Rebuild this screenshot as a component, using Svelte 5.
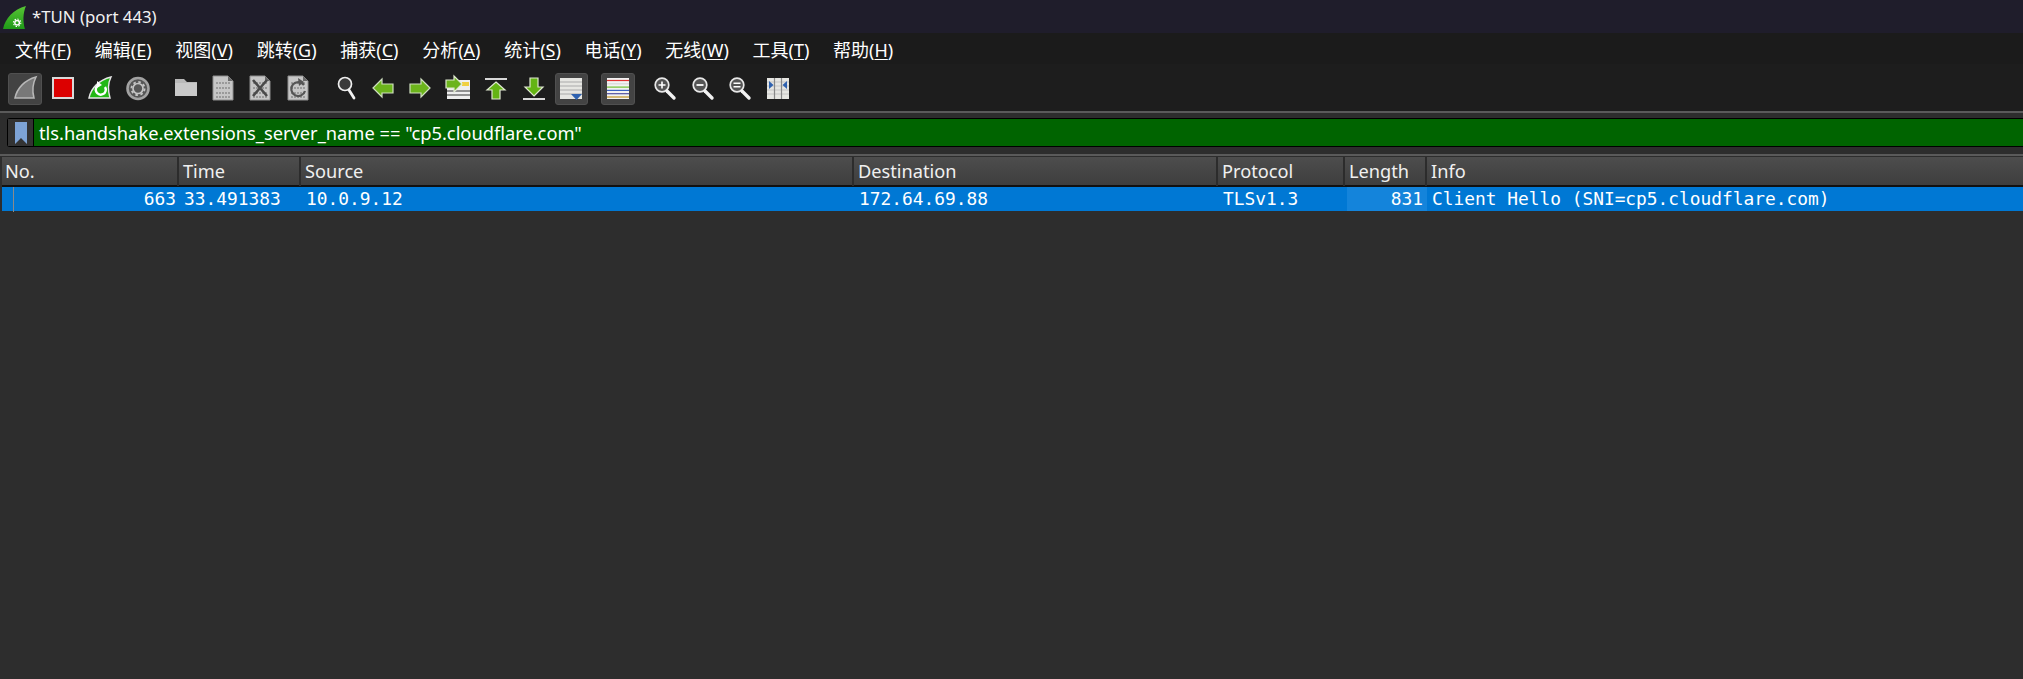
<script>
  const menus = [
    ['文件', 'F'], ['编辑', 'E'], ['视图', 'V'], ['跳转', 'G'], ['捕获', 'C'], ['分析', 'A'],
    ['统计', 'S'], ['电话', 'Y'], ['无线', 'W'], ['工具', 'T'], ['帮助', 'H']
  ];
  const groups = [
    [{ n: 'fin', on: true }, { n: 'stop' }, { n: 'reload' }, { n: 'gear' }],
    [{ n: 'folder' }, { n: 'doc' }, { n: 'close' }, { n: 'redo' }],
    [{ n: 'find' }, { n: 'left' }, { n: 'right' }, { n: 'goto' }, { n: 'first' }, { n: 'last' }, { n: 'auto', on: true }],
    [{ n: 'color', on: true }],
    [{ n: 'in' }, { n: 'out' }, { n: 'eq' }, { n: 'resize' }]
  ];
  const columns = ['No.', 'Time', 'Source', 'Destination', 'Protocol', 'Length', 'Info'];
  const colors = ['#e03030', '#d8d8d8', '#70c030', '#3a60c0', '#5050a0', '#c09020'];
</script>

{#snippet sheet()}
  <path d="M7 4H22L27 9V28H7Z" fill="#c6c6c6" stroke="#8e8e8e" stroke-width="1" />
  <path d="M22 4V9H27Z" fill="#6a6a6a" />
  <path d="M10 11H24M10 16H24M10 21H24M10 25H24" stroke="#9a9a9a" stroke-width="2" stroke-dasharray="2 1" />
{/snippet}

{#snippet lens(mark)}
  <circle cx="14" cy="13" r="6.8" fill="#555" stroke="#e8e8e8" stroke-width="1.7" />
  <path d="M19 19L26 26" stroke="#f2f2f2" stroke-width="3.4" stroke-linecap="round" />
  {#if mark === 'in'}<path d="M10.5 13H17.5M14 9.5V16.5" stroke="#fff" stroke-width="1.6" />{/if}
  {#if mark === 'out'}<path d="M10.5 13H17.5" stroke="#fff" stroke-width="1.8" />{/if}
  {#if mark === 'eq'}<path d="M10.5 11.3H17.5M10.5 14.7H17.5" stroke="#fff" stroke-width="1.5" />{/if}
{/snippet}

{#snippet icon(n)}
  <svg class="glyph" viewBox="0 0 34 34" width="34" height="34" aria-hidden="true">
    {#if n === 'fin'}
      <path d="M7 26C9 16 17 8 28 5C25 11 24 19 26 26Z" fill="#787878" stroke="#b8b8b8" stroke-width="1.5" />
    {:else if n === 'stop'}
      <rect x="7" y="6" width="20" height="20" fill="#dc0000" stroke="#d9d9d9" stroke-width="2" />
    {:else if n === 'reload'}
      <path d="M6 26C8 16 16 8 28 5C25 11 25 19 27 26Z" fill="#22b814" stroke="#e6e6e6" stroke-width="1.4" />
      <path d="M22 15A5 5 0 1 1 16 13" fill="none" stroke="#fff" stroke-width="2.4" />
      <path d="M14 9L19 13L14 16Z" fill="#fff" />
    {:else if n === 'gear'}
      <circle cx="17" cy="16.5" r="10.5" fill="#565656" stroke="#a2a2a2" stroke-width="2.6" />
      <circle cx="17" cy="16.5" r="5" fill="none" stroke="#c4c4c4" stroke-width="1.7" />
      <circle cx="17" cy="16.5" r="6.6" fill="none" stroke="#c4c4c4" stroke-width="1.8" stroke-dasharray="2.6 2.6" />
    {:else if n === 'folder'}
      <path d="M7 7H16L19 10H29V24H7Z" fill="#b9b9b9" />
      <path d="M7 11H29V24H7Z" fill="#c9c9c9" />
    {:else if n === 'doc'}
      {@render sheet()}
    {:else if n === 'close'}
      {@render sheet()}
      <path d="M10 8L24 24M24 8L10 24" stroke="#4a4a4a" stroke-width="2.6" />
    {:else if n === 'redo'}
      {@render sheet()}
      <path d="M23 13A7 7 0 1 0 24 19" fill="none" stroke="#555" stroke-width="2.2" />
      <path d="M17 6L23 10L18 14Z" fill="#555" />
    {:else if n === 'find'}
      <circle cx="17" cy="12" r="6.5" fill="#3a3a3a" stroke="#eee" stroke-width="1.7" />
      <path d="M21 18L26 26" stroke="#f2f2f2" stroke-width="2.8" stroke-linecap="round" />
    {:else if n === 'left'}
      <path d="M7 16L16 7V12H27V21H16V25Z" fill="#6cb41c" stroke="#cfe0c0" stroke-width="1.2" />
    {:else if n === 'right'}
      <path d="M27 16L18 7V12H7V21H18V25Z" fill="#6cb41c" stroke="#cfe0c0" stroke-width="1.2" />
    {:else if n === 'goto'}
      <path d="M6 8H29V27H6Z" fill="#eee" />
      <path d="M6 19H29M6 23H29" stroke="#333" stroke-width="1.2" />
      <rect x="21" y="10" width="7" height="4" fill="#f0d040" />
      <path d="M21 12L13 4V8H5V16H13V20Z" fill="#6cb41c" stroke="#dfe8d0" stroke-width="1.2" />
    {:else if n === 'first'}
      <path d="M6 7H28" stroke="#d8d8d8" stroke-width="2" />
      <path d="M17 10L26 18H21V27H13V18H8Z" fill="#64b414" stroke="#dfe8d0" stroke-width="1.2" />
    {:else if n === 'last'}
      <path d="M6 27H28" stroke="#d8d8d8" stroke-width="2" />
      <path d="M17 24L26 15H21V6H13V15H8Z" fill="#64b414" stroke="#dfe8d0" stroke-width="1.2" />
    {:else if n === 'auto'}
      <rect x="6" y="6" width="22" height="21" fill="#e6e6e2" />
      <path d="M6 10H28M6 14H28M6 18H28M6 22H28" stroke="#aaa" stroke-width="1" />
      <path d="M17 22H28L22.5 28Z" fill="#2f62b0" />
    {:else if n === 'color'}
      <rect x="6" y="6" width="22" height="21" fill="#f2f2f2" />
      {#each colors as c, i}
        <path d={`M6 ${8.5 + i * 3.3}H28`} stroke={c} stroke-width="1.2" />
      {/each}
    {:else if n === 'in' || n === 'out' || n === 'eq'}
      {@render lens(n)}
    {:else if n === 'resize'}
      <rect x="6" y="6" width="22" height="21" fill="#e6e6e2" />
      <path d="M6 10H28M6 14H28M6 18H28M6 22H28" stroke="#c4c4c4" stroke-width="1" />
      <path d="M13.5 6V27M20.5 6V27" stroke="#888" stroke-width="1.2" />
      <path d="M8 9L12.5 13L8 17ZM26 9L21.5 13L26 17Z" fill="#2f62b0" />
    {/if}
  </svg>
{/snippet}

<div class="window">
  <header class="title">
    <svg class="logo" viewBox="0 0 24 24" width="25" height="25" aria-hidden="true">
      <defs>
        <linearGradient id="finfill" x1="0" y1="0" x2="0" y2="1">
          <stop offset="0" stop-color="#58c535" />
          <stop offset="1" stop-color="#1f9a18" />
        </linearGradient>
      </defs>
      <path d="M1 23C3 13 11 4 23 1C20 8 20 16 22 23Z" fill="url(#finfill)" />
      <circle cx="14.5" cy="17" r="2.2" fill="none" stroke="#fff" stroke-width="1.4" />
      <circle cx="14.5" cy="17" r="3.6" fill="none" stroke="#fff" stroke-width="1" stroke-dasharray="1.4 1.4" />
    </svg>
    <span>*TUN (port 443)</span>
  </header>

  <nav class="menu">
    {#each menus as [label, key]}
      <span class="item">{label}(<u>{key}</u>)</span>
    {/each}
  </nav>

  <div class="tools">
    {#each groups as group, g}
      {#if g > 0}<i class="sep"></i>{/if}
      {#each group as t}
        <span class="slot" class:on={t.on}>{@render icon(t.n)}</span>
      {/each}
    {/each}
  </div>

  <div class="filter">
    <span class="mark">
      <svg viewBox="0 0 14 24" width="14" height="24" aria-hidden="true">
        <path d="M1 1H13V23L7 17L1 23Z" fill="#7da3d6" />
      </svg>
    </span>
    <span class="expr">tls.handshake.extensions_server_name == "cp5.cloudflare.com"</span>
  </div>

  <section class="list">
    <div class="grid head">
      {#each columns as c}<span class="th">{c}</span>{/each}
    </div>
    <div class="grid row">
      <span class="td no">663</span>
      <span class="td">33.491383</span>
      <span class="td">10.0.9.12</span>
      <span class="td">172.64.69.88</span>
      <span class="td">TLSv1.3</span>
      <span class="td len">831</span>
      <span class="td">Client Hello (SNI=cp5.cloudflare.com)</span>
    </div>
  </section>
</div>

<style>
  :global(body) {
    margin: 0;
    background: #2d2d2d;
  }
  .window {
    height: 679px;
    display: flex;
    flex-direction: column;
    overflow: hidden;
    font-family: "Noto Sans", "Noto Sans CJK SC", sans-serif;
    color: #f2f2f2;
  }
  .title {
    height: 33px;
    flex: none;
    background: #1f1d2b;
    display: flex;
    align-items: center;
    gap: 5px;
    padding-left: 2px;
    font-size: 16.8px;
    box-sizing: border-box;
  }
  .logo {
    margin-top: 2px;
  }
  .menu {
    height: 31px;
    flex: none;
    background: #1b1b1b;
    display: flex;
    align-items: center;
    padding-left: 4px;
    font-size: 18px;
    color: #fff;
  }
  .item {
    padding: 0 12.7px 0 11px;
    white-space: nowrap;
  }
  .item u {
    text-underline-offset: 2px;
  }
  .tools {
    height: 49px;
    flex: none;
    box-sizing: border-box;
    background: #1d1d1d;
    display: flex;
    align-items: center;
    padding: 3px 0 0 6px;
    border-bottom: 2px solid #5a5a5a;
  }
  .slot {
    width: 37.75px;
    height: 32px;
    display: flex;
    align-items: center;
    justify-content: center;
    position: relative;
  }
  .slot.on::before {
    content: "";
    position: absolute;
    left: 2px;
    right: 2px;
    top: 0;
    bottom: 0;
    background: #434343;
    border: 1px solid #505050;
    border-radius: 3px;
  }
  .glyph {
    position: relative;
    flex: none;
  }
  .sep {
    width: 9px;
    flex: none;
  }
  .filter {
    margin-top: 5px;
    flex: none;
    height: 29px;
    box-sizing: border-box;
    margin-left: 7px;
    background: #000;
    border: 1px solid #000;
    border-right: 0;
    border-radius: 3px 0 0 3px;
    display: flex;
  }
  .mark {
    width: 25px;
    flex: none;
    background: #333;
    display: flex;
    align-items: center;
    justify-content: center;
    margin-right: 1px;
  }
  .expr {
    flex: 1;
    background: #006400;
    font-size: 18.3px;
    line-height: 28px;
    padding-left: 5px;
    color: #fff;
  }
  .list {
    margin-top: 7px;
    flex: 1;
    border-top: 2px solid #5a5a5a;
    padding: 1px 0 0 2px;
    background: #2d2d2d;
  }
  .grid {
    display: grid;
    grid-template-columns: 177px 122px 553px 364px 127px 82px 1fr;
  }
  .head {
    height: 28px;
    background: linear-gradient(#4d4d4d, #3e3e3e);
    border-bottom: 2px solid #111;
  }
  .th {
    font-size: 18.2px;
    line-height: 29px;
    padding-left: 4px;
    border-right: 2px solid #2c2c2c;
    box-sizing: border-box;
    color: #f0f0f0;
  }
  .th:first-child {
    padding-left: 3px;
  }
  .th:last-child {
    border-right: 0;
  }
  .row {
    height: 24px;
    background: #0078d4;
    font-family: "DejaVu Sans Mono", monospace;
    font-size: 17.85px;
    line-height: 24px;
    color: #fff;
    position: relative;
  }
  .row::before {
    content: "";
    position: absolute;
    left: 11px;
    top: 0;
    bottom: -1px;
    width: 1px;
    background: #8a8a8a;
  }
  .td {
    padding-left: 5px;
    white-space: nowrap;
    overflow: hidden;
  }
  .no,
  .len {
    text-align: right;
    padding-right: 3px;
  }
  .len {
    background: #1484db;
    margin-left: 2px;
    padding-right: 4px;
  }
</style>
